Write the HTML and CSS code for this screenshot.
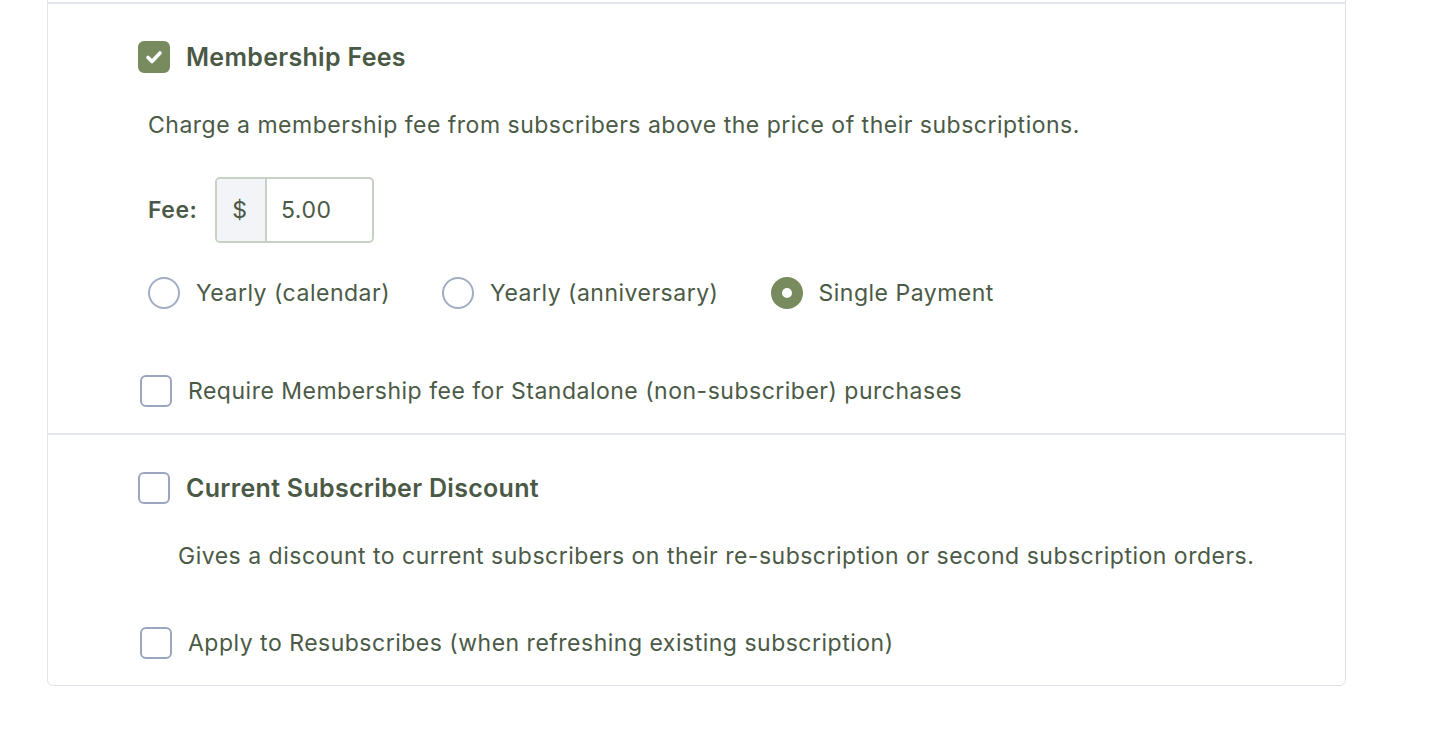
FILE: index.html
```html
<!DOCTYPE html>
<html>
<head>
<meta charset="utf-8">
<link rel="stylesheet" href="styles.css">
</head>
<body>
<div class="card">
  <div class="section section-prev"></div>
  <div class="section">
    <div class="head-row">
      <span class="box checked">
        <svg viewBox="0 0 32 32" width="32" height="32"><path d="M10 16.5 L14 20.5 L22 12" fill="none" stroke="#fff" stroke-width="3.6" stroke-linecap="round" stroke-linejoin="round"/></svg>
      </span>
      <span class="title">Membership Fees</span>
    </div>
    <p class="desc">Charge a membership fee from subscribers above the price of their subscriptions.</p>
    <div class="fee-row">
      <span class="fee-label">Fee:</span>
      <div class="input-group">
        <span class="prefix">$</span>
        <span class="value">5.00</span>
      </div>
    </div>
    <div class="radio-row">
      <label class="radio"><span class="circle"></span><span>Yearly (calendar)</span></label>
      <label class="radio"><span class="circle"></span><span>Yearly (anniversary)</span></label>
      <label class="radio"><span class="circle on"></span><span>Single Payment</span></label>
    </div>
    <label class="check-row req"><span class="box"></span><span>Require Membership fee for Standalone (non-subscriber) purchases</span></label>
  </div>
  <div class="section last">
    <div class="head-row">
      <span class="box"></span>
      <span class="title">Current Subscriber Discount</span>
    </div>
    <p class="desc desc2">Gives a discount to current subscribers on their re-subscription or second subscription orders.</p>
    <label class="check-row apply"><span class="box"></span><span>Apply to Resubscribes (when refreshing existing subscription)</span></label>
  </div>
</div>
</body>
</html>
```
FILE: styles.css
```css
* { box-sizing: border-box; }
html, body { margin: 0; padding: 0; background: #fff; }
body {
  font-family: Inter, "Open Sans", sans-serif;
  color: #4b5a46;
  font-size: 23px;
  letter-spacing: 0.5px;
  overflow: hidden;
}
.card {
  margin: -20px 0 0 47px;
  width: 1299px;
  border: 1px solid #dfe3ee;
  border-radius: 6px;
  background: #fff;
}
.section { border-bottom: 2px solid #e3e6ef; padding: 37px 0 26px 90px; }
.section-prev { height: 23px; padding: 0; }
.section.last { border-bottom: none; }
.head-row { display: flex; align-items: center; height: 32px; }
.box {
  width: 32px; height: 32px;
  border: 2px solid #9ba5bd;
  border-radius: 6px;
  flex: none;
  position: relative;
}
.box.checked { background: #778b5e; border-color: #778b5e; }
.box.checked svg { display: block; position: absolute; left: -2px; top: -2px; }
.title { margin-left: 16px; font-weight: 600; font-size: 25px; letter-spacing: 0.3px; color: #4a5945; }
.desc { margin: 36px 0 0 10px; line-height: 32px; }
.desc2 { margin-left: 40px; }
.fee-row { display: flex; align-items: center; margin: 36px 0 0 10px; height: 66px; }
.fee-label { font-weight: 600; width: 67px; }
.input-group {
  display: flex; height: 66px; width: 159px;
  border: 2px solid #c8d1c6; border-radius: 5px; overflow: hidden;
}
.prefix {
  width: 50px; background: #f3f4f8; border-right: 2px solid #c8d1c6;
  display: flex; align-items: center; justify-content: center; padding-right: 2px;
}
.value { display: flex; align-items: center; padding-left: 14px; }
.radio-row { display: flex; align-items: center; margin: 34px 0 0 10px; height: 32px; }
.radio { display: flex; align-items: center; }
.radio + .radio { margin-left: 52px; }
.circle {
  width: 32px; height: 32px; border-radius: 50%;
  border: 2px solid #a3acc3; margin-right: 16px; flex: none;
}
.circle.on { border: 11px solid #778b5e; background: #fff; }
.check-row { display: flex; align-items: center; height: 32px; margin-left: 2px; }
.check-row .box { margin-right: 16px; }
.req { margin-top: 66px; }
.apply { margin-top: 55px; }
```
